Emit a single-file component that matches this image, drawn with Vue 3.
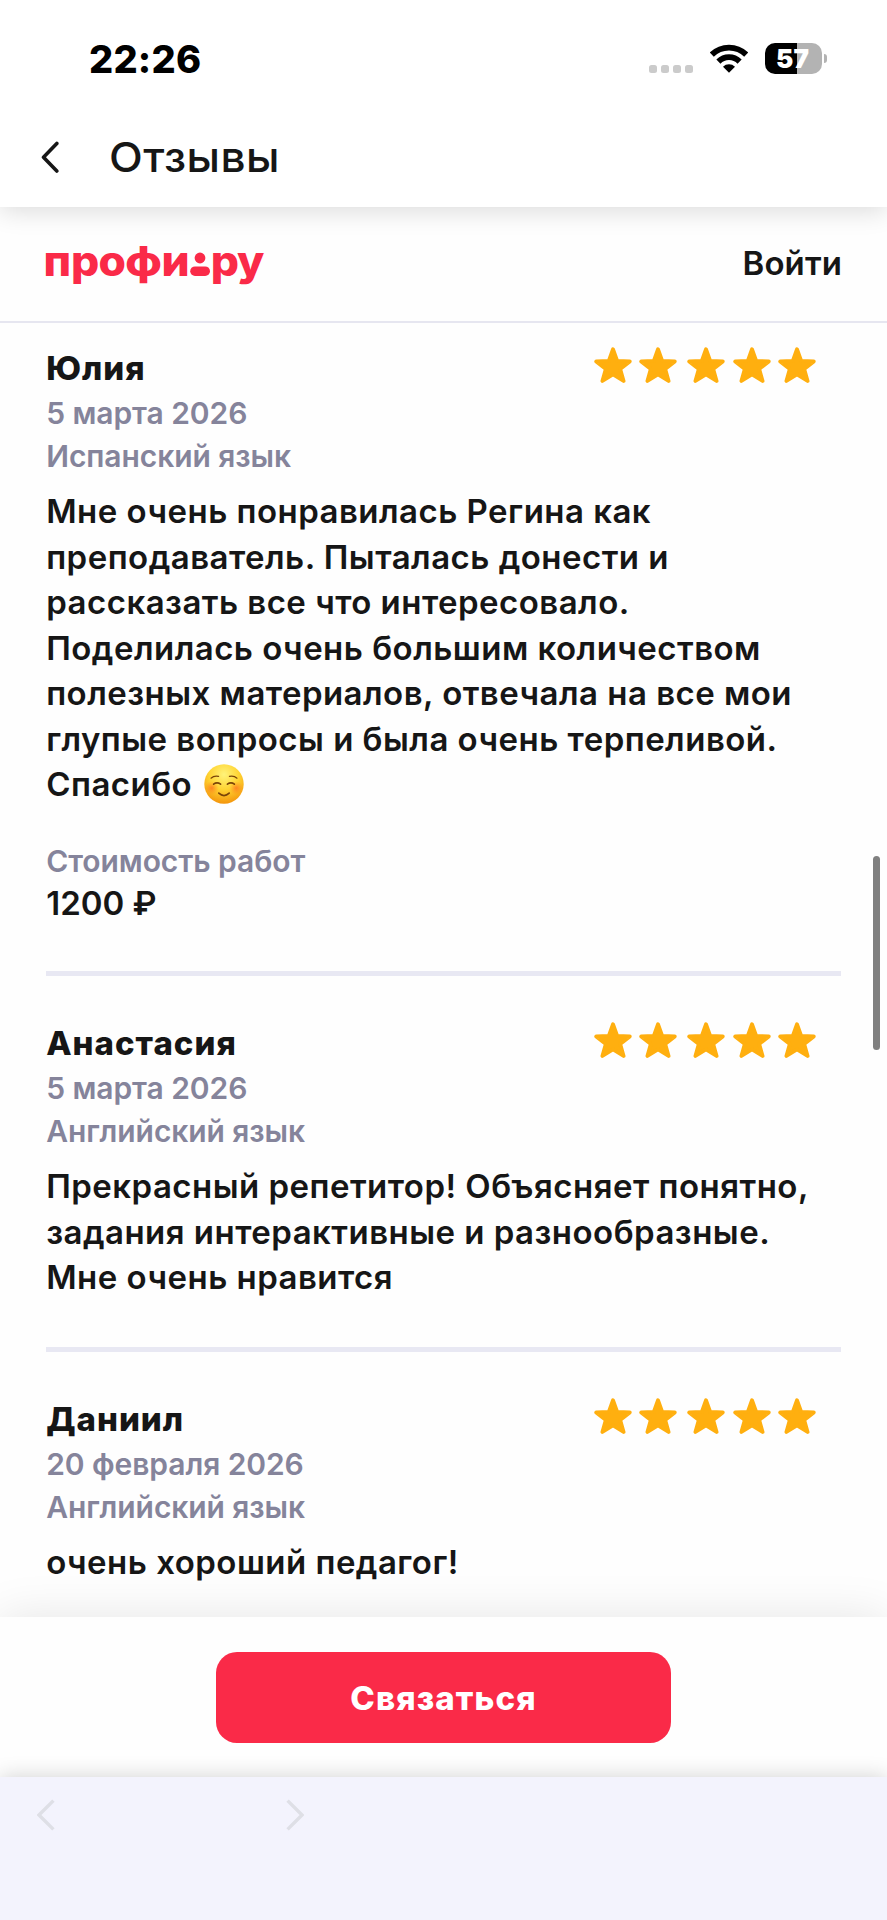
<script setup>
const reviews = [
  {
    name: 'Юлия',
    date: '5 марта 2026',
    subject: 'Испанский язык',
    lines: [
      'Мне очень понравилась Регина как',
      'преподаватель. Пыталась донести и',
      'рассказать все что интересовало.',
      'Поделилась очень большим количеством',
      'полезных материалов, отвечала на все мои',
      'глупые вопросы и была очень терпеливой.',
      'Спасибо',
    ],
    smile: true,
    price: '1200 ₽',
  },
  {
    name: 'Анастасия',
    date: '5 марта 2026',
    subject: 'Английский язык',
    lines: [
      'Прекрасный репетитор! Объясняет понятно,',
      'задания интерактивные и разнообразные.',
      'Мне очень нравится',
    ],
  },
  {
    name: 'Даниил',
    date: '20 февраля 2026',
    subject: 'Английский язык',
    lines: ['очень хороший педагог!'],
  },
]
</script>

<template>
  <div class="screen">
    <header class="top">
      <div class="status">
        <span class="time">22:26</span>
        <div class="indicators">
          <span class="dots"><i v-for="n in 4" :key="n"></i></span>
          <svg class="wifi" viewBox="0 0 38 29" width="38" height="29">
            <g fill="none" stroke="#000" stroke-width="5.8">
              <path d="M1.8 10.6 A24.6 24.6 0 0 1 36.2 10.6" />
              <path d="M8.4 17.6 A15 15 0 0 1 29.6 17.6" />
            </g>
            <path d="M19 28.8 L13 22.8 A8.6 8.6 0 0 1 25 22.8 Z" fill="#000" />
          </svg>
          <span class="battery"><span class="level">57</span></span>
          <span class="nub"></span>
        </div>
      </div>
      <div class="nav">
        <svg class="back" viewBox="0 0 18 32" width="18" height="32">
          <path d="M15.8 2.4 L2.5 16.2 L15.8 30" />
        </svg>
        <h1>Отзывы</h1>
      </div>
    </header>

    <div class="account">
      <svg class="logo" viewBox="0 0 222 50" width="222" height="50">
        <g transform="scale(1.08 1)">
          <text y="37" x="-1.4 24 49.5 74.2 107.8">профи</text>
          <text y="37" x="153.4 177.8">ру</text>
        </g>
        <circle cx="155" cy="19" r="5.4" />
        <rect x="145.2" y="27.4" width="19.8" height="9.6" rx="4.8" />
      </svg>
      <a class="login">Войти</a>
    </div>

    <main class="feed">
      <article v-for="r in reviews" :key="r.name" class="review">
        <div class="head">
          <h2>{{ r.name }}</h2>
          <div class="stars">
            <svg v-for="n in 5" :key="n" viewBox="0 0 38 36" width="38" height="36">
              <path d="M19 2.2 L23.2 13.9 L35.8 14.4 L26.2 22 L29.6 34 L19 27.4 L8.4 34 L11.8 22 L2.2 14.4 L14.8 13.9 Z" />
            </svg>
          </div>
        </div>
        <p class="meta">{{ r.date }}</p>
        <p class="meta">{{ r.subject }}</p>
        <div class="body">
          <p v-for="(line, i) in r.lines" :key="i">
            {{ line }}
            <svg v-if="r.smile && i === r.lines.length - 1" class="smile" viewBox="0 0 40 40" width="40" height="40">
              <defs>
                <radialGradient id="face" cx=".5" cy=".26" r=".76">
                  <stop offset="0" stop-color="#fff37a" />
                  <stop offset=".5" stop-color="#ffd433" />
                  <stop offset="1" stop-color="#f3920a" />
                </radialGradient>
                <radialGradient id="blush">
                  <stop offset="0" stop-color="#ff5a1e" stop-opacity=".6" />
                  <stop offset="1" stop-color="#ff7a1e" stop-opacity="0" />
                </radialGradient>
              </defs>
              <circle cx="20" cy="20" r="19.7" fill="url(#face)" />
              <circle cx="7.8" cy="24" r="7" fill="url(#blush)" />
              <circle cx="32.2" cy="24" r="7" fill="url(#blush)" />
              <g fill="none" stroke="#7a4508" stroke-linecap="round">
                <path d="M7 14.2 Q10 11.4 14.6 12.4 M33 14.2 Q30 11.4 25.4 12.4" stroke-width="1.2" />
                <path d="M9.6 20.2 Q13 17.6 16.6 20.2 M23.4 20.2 Q27 17.6 30.4 20.2" stroke-width="1.6" />
                <path d="M14.8 29.2 Q20 34 25.2 29.2" stroke-width="1.7" />
              </g>
            </svg>
          </p>
        </div>
        <div v-if="r.price" class="cost">
          <p class="meta">Стоимость работ</p>
          <p class="price">{{ r.price }}</p>
        </div>
      </article>
    </main>

    <div class="contact">
      <button type="button">Связаться</button>
    </div>

    <footer class="toolbar">
      <svg viewBox="0 0 18 32" width="18" height="32"><path d="M16.4 1.6 L2 16 L16.4 30.4" /></svg>
      <svg viewBox="0 0 18 32" width="18" height="32"><path d="M1.6 1.6 L16 16 L1.6 30.4" /></svg>
    </footer>

    <div class="scrollbar"></div>
  </div>
</template>

<style>
body {
  background: #fff;
}
</style>

<style scoped>
.screen {
  position: relative;
  display: flex;
  flex-direction: column;
  width: 887px;
  height: 1920px;
  overflow: hidden;
  background: #fefefe;
  color: #161616;
  font-family: Inter, "Liberation Sans", sans-serif;
}
h1, h2, p {
  margin: 0;
}
.top {
  position: relative;
  z-index: 1;
  flex: none;
  height: 207px;
  background: #fff;
  box-shadow: 0 4px 24px rgba(0, 0, 0, 0.14);
}
.status {
  display: flex;
  align-items: center;
  justify-content: space-between;
  height: 117px;
  padding: 0 60px 0 89px;
  box-sizing: border-box;
}
.time {
  color: #000;
  font-size: 38px;
  font-weight: 800;
  line-height: 46px;
  letter-spacing: 0.2px;
}
.indicators {
  display: flex;
  align-items: center;
}
.dots {
  display: flex;
  gap: 4px;
  margin: 21px 17px 0 0;
}
.dots i {
  width: 8px;
  height: 8px;
  border-radius: 2.5px;
  background: #cbcbcb;
}
.wifi {
  margin-right: 17px;
}
.battery {
  width: 57px;
  height: 31px;
  border-radius: 10px;
  background: linear-gradient(90deg, #000 0 32.5px, #b3b3b3 32.5px);
  text-align: center;
}
.level {
  color: #fff;
  font-size: 26px;
  font-weight: 900;
  line-height: 31px;
  margin-left: -2px;
}
.nub {
  width: 3px;
  height: 9px;
  margin-left: 2px;
  border-radius: 0 4px 4px 0;
  background: #b3b3b3;
}
.nav {
  display: flex;
  align-items: center;
  gap: 50px;
  height: 90px;
  padding: 0 41px 11px;
  box-sizing: border-box;
}
.back path {
  fill: none;
  stroke: #161616;
  stroke-width: 3.6;
  stroke-linecap: round;
  stroke-linejoin: round;
}
h1 {
  font-size: 41px;
  font-weight: 500;
  line-height: 50px;
  letter-spacing: 0.4px;
  transform: scaleX(1.075);
  transform-origin: 0 50%;
}
.account {
  display: flex;
  flex: none;
  align-items: center;
  justify-content: space-between;
  height: 116px;
  padding: 0 45px;
  border-bottom: 2px solid #e6e6f0;
  box-sizing: border-box;
}
.logo {
  fill: #fa2a48;
  font-size: 41px;
  font-weight: 800;
  overflow: visible;
}
.login {
  padding-bottom: 2px;
  font-size: 33px;
  font-weight: 600;
  line-height: 40px;
  letter-spacing: 0.1px;
}
.feed {
  height: 1294px;
  overflow: hidden;
  padding: 22px 45.6px 0;
  box-sizing: border-box;
}
.review + .review {
  margin-top: 46px;
  padding-top: 44px;
  border-top: 5px solid #e8e8f3;
}
.head {
  display: flex;
  justify-content: space-between;
  height: 47px;
}
h2 {
  padding-left: 0.6px;
  font-size: 33px;
  font-weight: 800;
  line-height: 46px;
  letter-spacing: 1px;
}
.stars {
  display: flex;
  gap: 7.5px;
  padding: 2px 25px 0 0;
}
.stars svg:nth-child(3) {
  margin-left: 2.6px;
}
.stars path {
  fill: #ffaf0f;
  stroke: #ffaf0f;
  stroke-width: 3.8;
  stroke-linejoin: round;
}
.meta {
  padding-left: 0.6px;
  color: #85849b;
  font-size: 30px;
  font-weight: 600;
  line-height: 43px;
  letter-spacing: -0.08px;
}
.body {
  margin-top: 11.3px;
  padding-left: 0.6px;
  font-size: 33px;
  font-weight: 600;
  line-height: 45.5px;
  letter-spacing: 0.47px;
}
.body p {
  height: 45.5px;
  white-space: nowrap;
}
.smile {
  margin-left: 3px;
  vertical-align: -8px;
}
.cost {
  margin: 32px 0 47px;
}
.price {
  padding-left: 0.6px;
  font-size: 33px;
  font-weight: 600;
  line-height: 41px;
}
.contact {
  display: flex;
  flex: none;
  align-items: center;
  justify-content: center;
  height: 160px;
  background: #fefefe;
  box-shadow: 0 0 44px rgba(0, 0, 0, 0.1);
}
button {
  width: 455px;
  height: 91px;
  padding: 1px 0 0;
  border: 0;
  border-radius: 21px;
  background: #fa2a48;
  color: #fff;
  font-family: inherit;
  font-size: 33px;
  font-weight: 800;
  letter-spacing: 1.1px;
}
.toolbar {
  z-index: 1;
  display: flex;
  flex: none;
  align-items: flex-start;
  gap: 231px;
  height: 143px;
  padding: 22px 37px 0;
  box-sizing: border-box;
  background: #f3f3fd;
  box-shadow: 0 0 20px rgba(0, 0, 0, 0.18);
}
.toolbar path {
  fill: none;
  stroke: #dedfe6;
  stroke-width: 3.4;
}
.scrollbar {
  position: absolute;
  top: 856px;
  right: 7px;
  width: 7px;
  height: 194px;
  border-radius: 4px;
  background: #808080;
}
</style>
